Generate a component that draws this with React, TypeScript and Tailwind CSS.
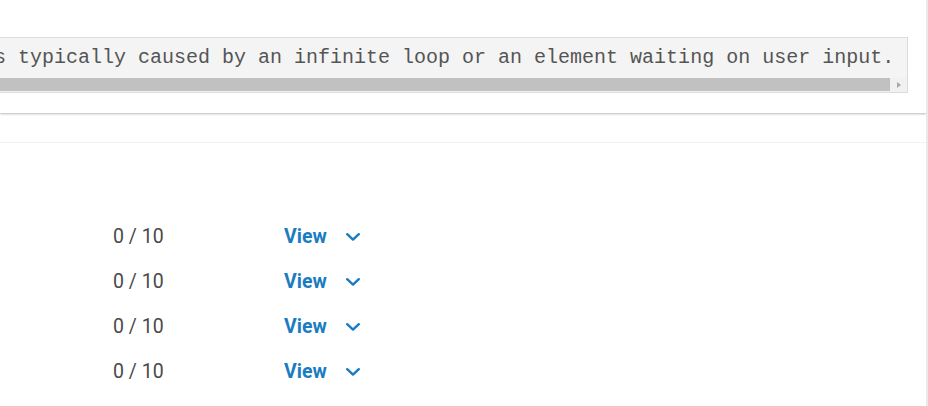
// Linhas da tabela de resultados (todas zeradas no print de referência)
const LINHAS = [1, 2, 3, 4]

function Chevron() {
  return (
    <svg width="14" height="8" viewBox="0 0 14 8" fill="none" className="shrink-0">
      <path d="M1.2 1.2 L7 6.6 L12.8 1.2" stroke="#1a7cc1" strokeWidth="2.4" strokeLinecap="round" strokeLinejoin="round" />
    </svg>
  )
}

function CaixaErro() {
  return (
    <div className="border border-l-0 border-[#dcdcdc] bg-[#f4f4f4]">
      {/* Texto com rolagem horizontal: começa cortado à esquerda */}
      <div className="h-[40px] overflow-hidden pt-[8px]">
        <div
          className="ml-[-78px] whitespace-pre text-[20px] leading-[24px] text-[#555555]"
          style={{ fontFamily: '"Liberation Mono", "Courier New", monospace' }}
        >
          This is typically caused by an infinite loop or an element waiting on user input.
        </div>
      </div>
      {/* Barra de rolagem desenhada à mão */}
      <div className="flex h-[14px] bg-[#f1f1f1]">
        <div className="h-[13px] flex-1 bg-[#c1c1c1]" />
        <div className="flex w-[17px] items-center justify-center">
          <div className="h-0 w-0 border-y-[3.5px] border-l-[4px] border-y-transparent border-l-[#a8a8a8]" />
        </div>
      </div>
    </div>
  )
}

export default function App() {
  return (
    <div className="flex h-[406px] w-[928px] overflow-hidden bg-white" style={{ fontFamily: 'Roboto, "Noto Sans", sans-serif' }}>
      <div className="flex w-[926px] flex-col">
        {/* Card do erro */}
        <div className="bg-white pb-[20px] pr-[18px] pt-[37px] shadow-[0_1px_2px_rgba(0,0,0,0.28)]">
          <CaixaErro />
        </div>

        <div className="mt-[29px] h-px bg-[#f2f2f2]" />

        {/* Linhas de pontuação */}
        <div className="mt-[71px] flex flex-col">
          {LINHAS.map((i) => (
            <div key={i} className="flex h-[45px] items-center">
              <span className="ml-[113px] w-[171px] text-[19.5px] text-[#4a4a4a]">0 / 10</span>
              <button className="flex items-center gap-[19px] text-[19.5px] font-bold text-[#1a7cc1]">
                View
                <Chevron />
              </button>
            </div>
          ))}
        </div>
      </div>
      <div className="w-[2px] bg-[#e9e9e9]" />
    </div>
  )
}
